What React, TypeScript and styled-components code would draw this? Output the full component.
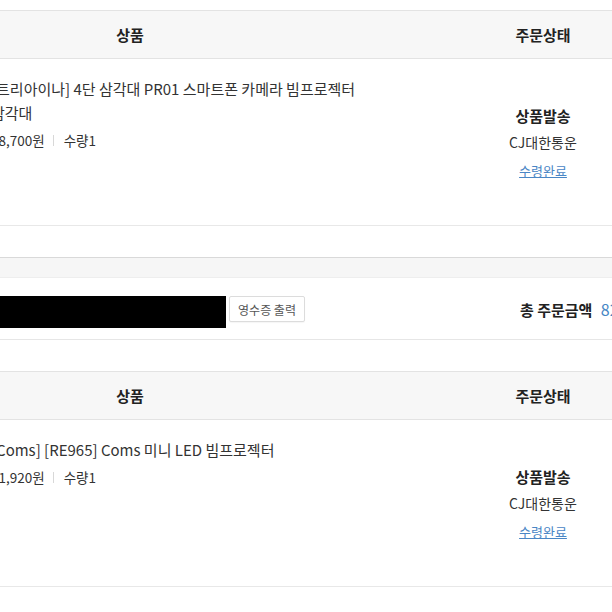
import React from 'react'
import styled, { createGlobalStyle } from 'styled-components'

const Global = createGlobalStyle`
  html, body {
    margin: 0;
    padding: 0;
    overflow: hidden;
    background: #fff;
  }
  body {
    font-family: "Noto Sans CJK KR", "Noto Sans", sans-serif;
    color: #333;
  }
`

type Item = {
  title: string
  price: string
  qty: number
  status: string
  courier: string
}

const orders: { items: Item[]; total?: string }[] = [
  {
    items: [
      {
        title: '[트리아이나] 4단 삼각대 PR01 스마트폰 카메라 빔프로젝터 삼각대',
        price: '18,700원',
        qty: 1,
        status: '상품발송',
        courier: 'CJ대한통운',
      },
    ],
  },
  {
    total: '82,620원',
    items: [
      {
        title: '[Coms] [RE965] Coms 미니 LED 빔프로젝터',
        price: '71,920원',
        qty: 1,
        status: '상품발송',
        courier: 'CJ대한통운',
      },
    ],
  },
]

function OrderTable({ items }: { items: Item[] }) {
  return (
    <div>
      <Head>
        <HeadCell>상품</HeadCell>
        <HeadCell>주문상태</HeadCell>
      </Head>
      {items.map((it, i) => (
        <Row key={i}>
          <ProductCell>
            <Thumb />
            <Info>
              <Title>{it.title}</Title>
              <Meta>
                <span>{it.price}</span>
                <Sep />
                <span>수량{it.qty}</span>
              </Meta>
            </Info>
          </ProductCell>
          <StatusCell>
            <Status>{it.status}</Status>
            <Courier>{it.courier}</Courier>
            <Receive href="#">수령완료</Receive>
          </StatusCell>
        </Row>
      ))}
    </div>
  )
}

export default function App() {
  return (
    <>
      <Global />
      <Page>
        <OrderTable items={orders[0].items} />
        <Order>
          <OrderBar />
          <OrderInfo>
            <Redacted />
            <ReceiptButton>영수증 출력</ReceiptButton>
            <Total>
              총 주문금액 <Amount>{orders[1].total}</Amount>
            </Total>
          </OrderInfo>
          <OrderTable items={orders[1].items} />
        </Order>
      </Page>
    </>
  )
}

const Page = styled.div`
  margin-left: -213px;
  width: 826px;
  padding-top: 10px;
`

const Head = styled.div`
  display: grid;
  grid-template-columns: 1fr 140px;
  height: 47px;
  align-items: center;
  background: #f7f7f7;
  border-top: 1px solid #e3e3e3;
  border-bottom: 1px solid #e3e3e3;
`

const HeadCell = styled.div`
  text-align: center;
  font-size: 15px;
  font-weight: bold;
  color: #222;
`

const Row = styled.div`
  display: grid;
  grid-template-columns: 1fr 140px;
  border-bottom: 1px solid #e8e8e8;
`

const ProductCell = styled.div`
  display: flex;
  gap: 29px;
  padding: 18px 0 18px 25px;
`

const Thumb = styled.div`
  flex: 0 0 150px;
  height: 130px;
  background: #fafafa;
`

const Info = styled.div`
  max-width: 395px;
`

const Title = styled.div`
  font-size: 15px;
  line-height: 24px;
  color: #333;
  word-break: keep-all;
`

const Meta = styled.div`
  display: flex;
  align-items: center;
  margin-top: 5px;
  font-size: 13.5px;
  line-height: 20px;
  color: #333;
`

const Sep = styled.span`
  width: 1px;
  height: 11px;
  background: #d8d8d8;
  margin: 0 10px 0 8px;
`

const StatusCell = styled.div`
  display: flex;
  flex-direction: column;
  align-items: center;
  justify-content: center;
  padding-top: 3px;
`

const Status = styled.div`
  font-size: 15px;
  font-weight: bold;
  line-height: 26px;
  color: #222;
`

const Courier = styled.div`
  font-size: 14px;
  line-height: 26px;
  color: #333;
`

const Receive = styled.a`
  margin-top: 3px;
  font-size: 13px;
  line-height: 26px;
  color: #4a86c5;
  text-decoration: underline;
`

const Order = styled.div`
  margin-top: 31px;
  border-top: 1px solid #d9d9d9;
  & > div:last-child {
    margin-top: 31px;
  }
`

const OrderBar = styled.div`
  height: 19px;
  background: #f6f6f6;
  border-bottom: 1px solid #eeeeee;
`

const OrderInfo = styled.div`
  display: flex;
  align-items: flex-start;
  height: 62px;
  box-sizing: border-box;
  padding: 18px 0 0 20px;
  border-bottom: 1px solid #e6e6e6;
`

const Redacted = styled.span`
  width: 419px;
  height: 32px;
  background: #000;
`

const ReceiptButton = styled.button`
  margin-left: 3px;
  width: 76px;
  height: 26px;
  padding: 0;
  border: 1px solid #dcdcdc;
  border-radius: 2px;
  background: #fff;
  font-family: inherit;
  font-size: 12px;
  color: #555;
  box-shadow: 0 1px 1px rgba(0, 0, 0, 0.04);
`

const Total = styled.div`
  margin-left: auto;
  width: 93px;
  white-space: nowrap;
  font-size: 15px;
  font-weight: bold;
  line-height: 26px;
  color: #222;
`

const Amount = styled.span`
  color: #4585c4;
  font-weight: normal;
  font-size: 16px;
  margin-left: 5px;
`
